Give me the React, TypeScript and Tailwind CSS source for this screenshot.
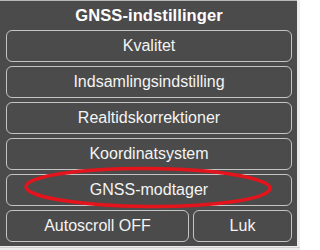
import React from "react";

const items = ["Kvalitet", "Indsamlingsindstilling", "Realtidskorrektioner", "Koordinatsystem", "GNSS-modtager"];

function MenuButton({ label, className = "" }: { label: string; className?: string }) {
  return (
    <button className={`h-[32px] rounded-[6px] border border-[#c4c4c4] bg-[#4b4b4b] text-[16px] leading-none text-[#f4f4f4] flex items-center justify-center ${className}`}>
      {label}
    </button>
  );
}

export default function App() {
  return (
    <div className="relative w-[300px] h-[250px] overflow-hidden bg-[#ececec] font-['Liberation_Sans',Arial,sans-serif]">
      {/* Panel */}
      <div className="w-[297px] h-[246px] bg-[#4b4b4b] border-t border-[#b8b8b8] pl-[6px] pr-[5px] flex flex-col">
        <div className="h-[29px] flex items-center justify-center text-[16.5px] font-bold text-white tracking-[0.1px]">
          GNSS-indstillinger
        </div>
        <div className="flex flex-col gap-[4px]">
          {items.map((label) => (
            <MenuButton key={label} label={label} className="w-full" />
          ))}
          <div className="flex gap-[4px]">
            <MenuButton label="Autoscroll OFF" className="w-[183px]" />
            <MenuButton label="Luk" className="flex-1" />
          </div>
        </div>
      </div>
      <div className="h-px bg-[#d0d0d0] mt-[1px]" />

      {/* Red annotation ellipse */}
      <svg className="absolute left-0 top-0 pointer-events-none" width="300" height="250" viewBox="0 0 300 250">
        <ellipse cx="148" cy="187.5" rx="122" ry="19" fill="none" stroke="#e3141c" strokeWidth="3.5" transform="rotate(0.4 148 187.5)" />
      </svg>
    </div>
  );
}
